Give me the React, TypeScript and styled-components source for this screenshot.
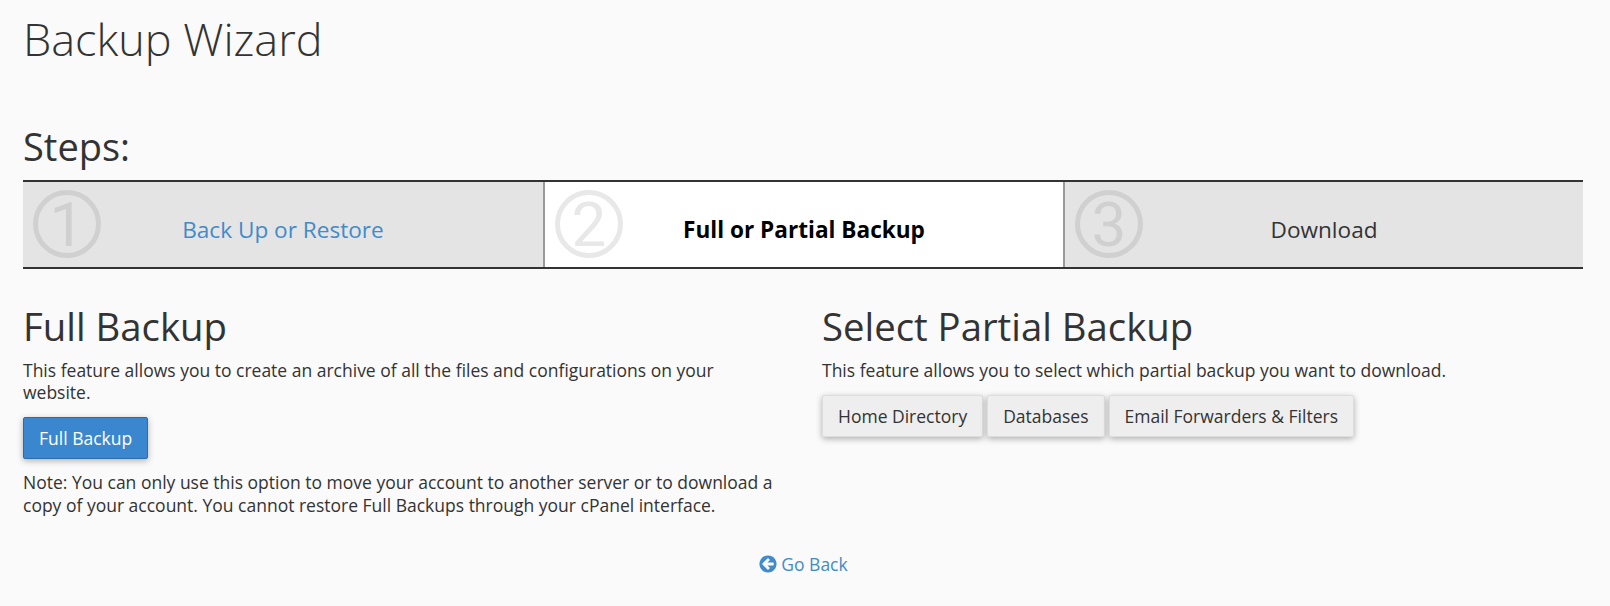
import styled, { createGlobalStyle } from "styled-components";

const GlobalStyle = createGlobalStyle`
  html, body {
    margin: 0;
    padding: 0;
    background: #fafafa;
    color: #333;
    font-family: "Open Sans", "Liberation Sans", sans-serif;
    font-size: 17.5px;
    line-height: 22.4px;
  }
`;

const steps = [
  { num: "1", label: "Back Up or Restore", state: "link" },
  { num: "2", label: "Full or Partial Backup", state: "current" },
  { num: "3", label: "Download", state: "plain" },
] as const;

type StepState = "link" | "current" | "plain";

const App = () => {
  return (
    <Page>
      <GlobalStyle />
      <Title>Backup Wizard</Title>
      <StepsHeading>Steps:</StepsHeading>
      <StepBar>
        {steps.map((s) => (
          <Step key={s.num} $state={s.state}>
            <StepNumber viewBox="0 0 70 70" $state={s.state}>
              <circle cx="35" cy="35" r="31.5" />
              <text x="35" y="57" textAnchor="middle">
                {s.num}
              </text>
            </StepNumber>
            <StepLabel $state={s.state}>{s.label}</StepLabel>
          </Step>
        ))}
      </StepBar>
      <Columns>
        <Column>
          <SectionTitle>Full Backup</SectionTitle>
          <Text>
            This feature allows you to create an archive of all the files and configurations on your website.
          </Text>
          <PrimaryButton>Full Backup</PrimaryButton>
          <Text>
            Note: You can only use this option to move your account to another server or to download a copy of your
            account. You cannot restore Full Backups through your cPanel interface.
          </Text>
        </Column>
        <Column>
          <SectionTitle>Select Partial Backup</SectionTitle>
          <Text>This feature allows you to select which partial backup you want to download.</Text>
          <ButtonRow>
            <DefaultButton>Home Directory</DefaultButton>
            <DefaultButton>Databases</DefaultButton>
            <DefaultButton>Email Forwarders &amp; Filters</DefaultButton>
          </ButtonRow>
        </Column>
      </Columns>
      <Footer>
        <BackLink href="#">
          <BackIcon viewBox="0 0 1792 1792">
            <path d="M1408 960v-128q0-26-19-45t-45-19h-502l189-189q19-19 19-45t-19-45l-91-91q-18-18-45-18t-45 18l-362 362-91 91q-18 18-18 45t18 45l91 91 362 362q18 18 45 18t45-18l91-91q18-18 18-45t-18-45l-189-189h502q26 0 45-19t19-45zm256-64q0 209-103 385.5t-279.5 279.5-385.5 103-385.5-103-279.5-279.5-103-385.5 103-385.5 279.5-279.5 385.5-103 385.5 103 279.5 279.5 103 385.5z" />
          </BackIcon>
          Go Back
        </BackLink>
      </Footer>
    </Page>
  );
};

export default App;

const Page = styled.div`
  width: 1610px;
  height: 606px;
  box-sizing: border-box;
  padding: 0 27px 0 23px;
  overflow: hidden;
`;
const Title = styled.h1`
  margin: 0;
  padding-top: 14px;
  font-size: 45px;
  line-height: 50px;
  font-weight: 300;
`;
const StepsHeading = styled.h2`
  margin: 61px 0 0;
  font-size: 38px;
  line-height: 42px;
  font-weight: 400;
`;
const StepBar = styled.div`
  display: grid;
  grid-template-columns: repeat(3, 1fr);
  margin-top: 13px;
  border-top: 2px solid #333;
  border-bottom: 2px solid #333;
`;
const Step = styled.div<{ $state: StepState }>`
  position: relative;
  height: 85px;
  display: flex;
  align-items: center;
  justify-content: center;
  background: ${(p) => (p.$state === "current" ? "#fff" : "#e4e4e4")};
  & + & {
    border-left: 2px solid #999;
  }
`;
const StepNumber = styled.svg<{ $state: StepState }>`
  position: absolute;
  left: 9px;
  top: 7px;
  width: 70px;
  height: 70px;
  overflow: visible;
  circle {
    fill: none;
    stroke-width: 5;
    stroke: ${(p) => (p.$state === "current" ? "#e8e8e8" : "#d0d0d0")};
  }
  text {
    font-family: Roboto, "Liberation Sans", sans-serif;
    font-size: 62px;
    fill: ${(p) => (p.$state === "current" ? "#e8e8e8" : "#d0d0d0")};
  }
`;
const StepLabel = styled.span<{ $state: StepState }>`
  font-size: 22.6px;
  line-height: 30px;
  margin-top: 10px;
  font-weight: ${(p) => (p.$state === "current" ? 700 : 400)};
  color: ${(p) => (p.$state === "link" ? "#428bca" : p.$state === "current" ? "#000" : "#333")};
`;
const Columns = styled.div`
  display: grid;
  grid-template-columns: 769px 1fr;
  column-gap: 30px;
  margin-top: 36px;
`;
const Column = styled.div``;
const SectionTitle = styled.h2`
  margin: 0 0 12px;
  font-size: 38.3px;
  line-height: 42px;
  font-weight: 400;
`;
const Text = styled.p`
  margin: 0;
  max-width: 755px;
  font-size: 17.5px;
  line-height: 22.4px;
`;
const BaseButton = styled.button`
  font-family: inherit;
  font-size: 17.5px;
  line-height: 22.4px;
  height: 42px;
  padding: 0 15px;
  border-radius: 2px;
  box-shadow: 0 2px 6px rgba(0, 0, 0, 0.3);
  cursor: pointer;
`;
const PrimaryButton = styled(BaseButton)`
  display: block;
  margin: 13px 0 12.5px;
  color: #fff;
  background: #3a87cf;
  border: 1px solid #2a6da8;
`;
const DefaultButton = styled(BaseButton)`
  color: #333;
  background: #eee;
  border: 1px solid #ddd;
`;
const ButtonRow = styled.div`
  display: flex;
  gap: 4px;
  margin-top: 14px;
`;
const Footer = styled.div`
  display: flex;
  justify-content: center;
  margin-top: 37px;
`;
const BackLink = styled.a`
  display: inline-flex;
  align-items: center;
  gap: 3px;
  color: #428bca;
  text-decoration: none;
  font-size: 17.5px;
`;
const BackIcon = styled.svg`
  width: 20px;
  height: 20px;
  fill: currentColor;
`;
